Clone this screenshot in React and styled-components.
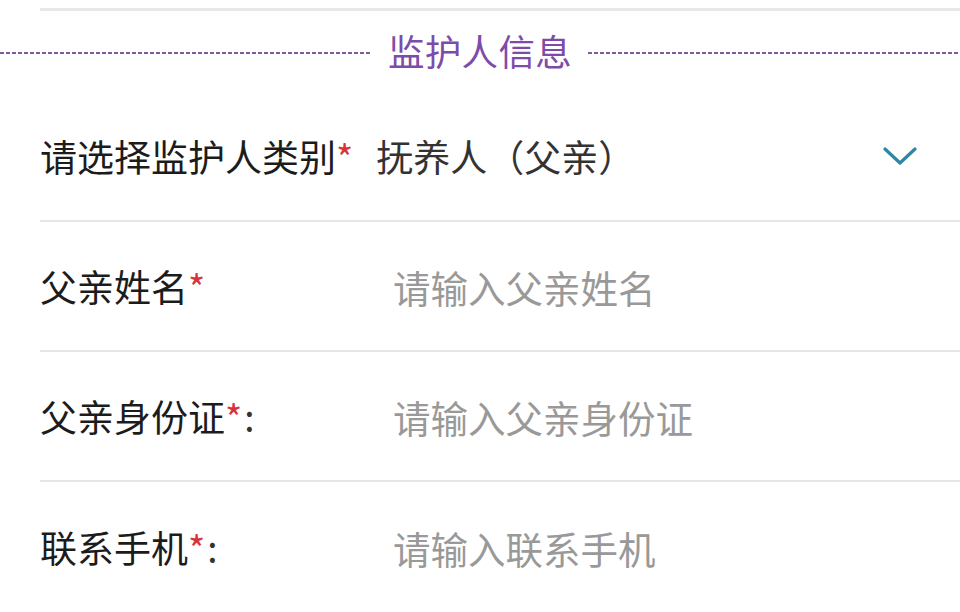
import React from "react";
import styled, { createGlobalStyle } from "styled-components";

const Global = createGlobalStyle`
  html, body { margin: 0; padding: 0; background: #ffffff; }
  body { font-family: "Noto Sans CJK SC", "Noto Sans", sans-serif; overflow: hidden; }
  * { box-sizing: border-box; }
`;

const Page = styled.div`
  width: 960px;
  height: 612px;
  background: #ffffff;
  padding-top: 8px;
  overflow: hidden;
`;

const PrevDivider = styled.div`
  margin-left: 40px;
  height: 3px;
  background: #e8e8e8;
`;

const SectionTitle = styled.div`
  display: flex;
  align-items: center;
  gap: 16px;
  height: 81px;
`;

const DashLine = styled.div`
  flex: 1;
  height: 2px;
  margin-top: 2px;
  background: repeating-linear-gradient(
    to right,
    #7f5b9a 0 4px,
    transparent 4px 6px
  );
`;

const TitleText = styled.span`
  font-size: 36.5px;
  line-height: 1;
  color: #7d4caa;
  letter-spacing: 0.3px;
`;

const Row = styled.div`
  display: flex;
  align-items: center;
  height: 130px;
  margin-left: 40px;
  padding-right: 43px;
  border-bottom: ${(p) => (p.$last ? "none" : "2px solid #e6e6e6")};
`;

const Label = styled.div`
  flex-shrink: 0;
  width: ${(p) => (p.$auto ? "auto" : "353px")};
  margin-right: ${(p) => (p.$auto ? "23px" : "0")};
  font-size: 37px;
  line-height: 1;
  color: #1c1c1c;
  white-space: nowrap;
`;

const Star = styled.span`
  color: #d8333b;
`;

const Colon = styled.span`
  color: #333333;
  margin-left: 2px;
`;

const Value = styled.div`
  flex: 1;
  font-size: 37px;
  line-height: 1;
  color: #333333;
  white-space: nowrap;
`;

const Input = styled.input`
  flex: 1;
  min-width: 0;
  border: none;
  outline: none;
  padding: 0;
  background: transparent;
  font-family: "Noto Sans CJK SC", "Noto Sans", sans-serif;
  font-size: 37.5px;
  line-height: 1;
  color: #333333;
  &::placeholder {
    color: #999999;
  }
`;

const Chevron = styled.svg`
  flex-shrink: 0;
  width: 34px;
  height: 18px;
`;

const fields = [
  { label: "父亲姓名", placeholder: "请输入父亲姓名", colon: false },
  { label: "父亲身份证", placeholder: "请输入父亲身份证", colon: true },
  { label: "联系手机", placeholder: "请输入联系手机", colon: true },
];

export default function App() {
  return (
    <Page>
      <Global />
      <PrevDivider />
      <SectionTitle>
        <DashLine />
        <TitleText>监护人信息</TitleText>
        <DashLine />
      </SectionTitle>
      <Row>
        <Label $auto>
          请选择监护人类别<Star>*</Star>
        </Label>
        <Value>抚养人（父亲）</Value>
        <Chevron viewBox="0 0 34 18">
          <path
            d="M2 2 L17 16 L32 2"
            fill="none"
            stroke="#2e86a3"
            strokeWidth="3.2"
            strokeLinecap="round"
            strokeLinejoin="round"
          />
        </Chevron>
      </Row>
      {fields.map((f, i) => (
        <Row key={f.label} $last={i === fields.length - 1}>
          <Label>
            {f.label}
            <Star>*</Star>
            {f.colon && <Colon>:</Colon>}
          </Label>
          <Input placeholder={f.placeholder} />
        </Row>
      ))}
    </Page>
  );
}
